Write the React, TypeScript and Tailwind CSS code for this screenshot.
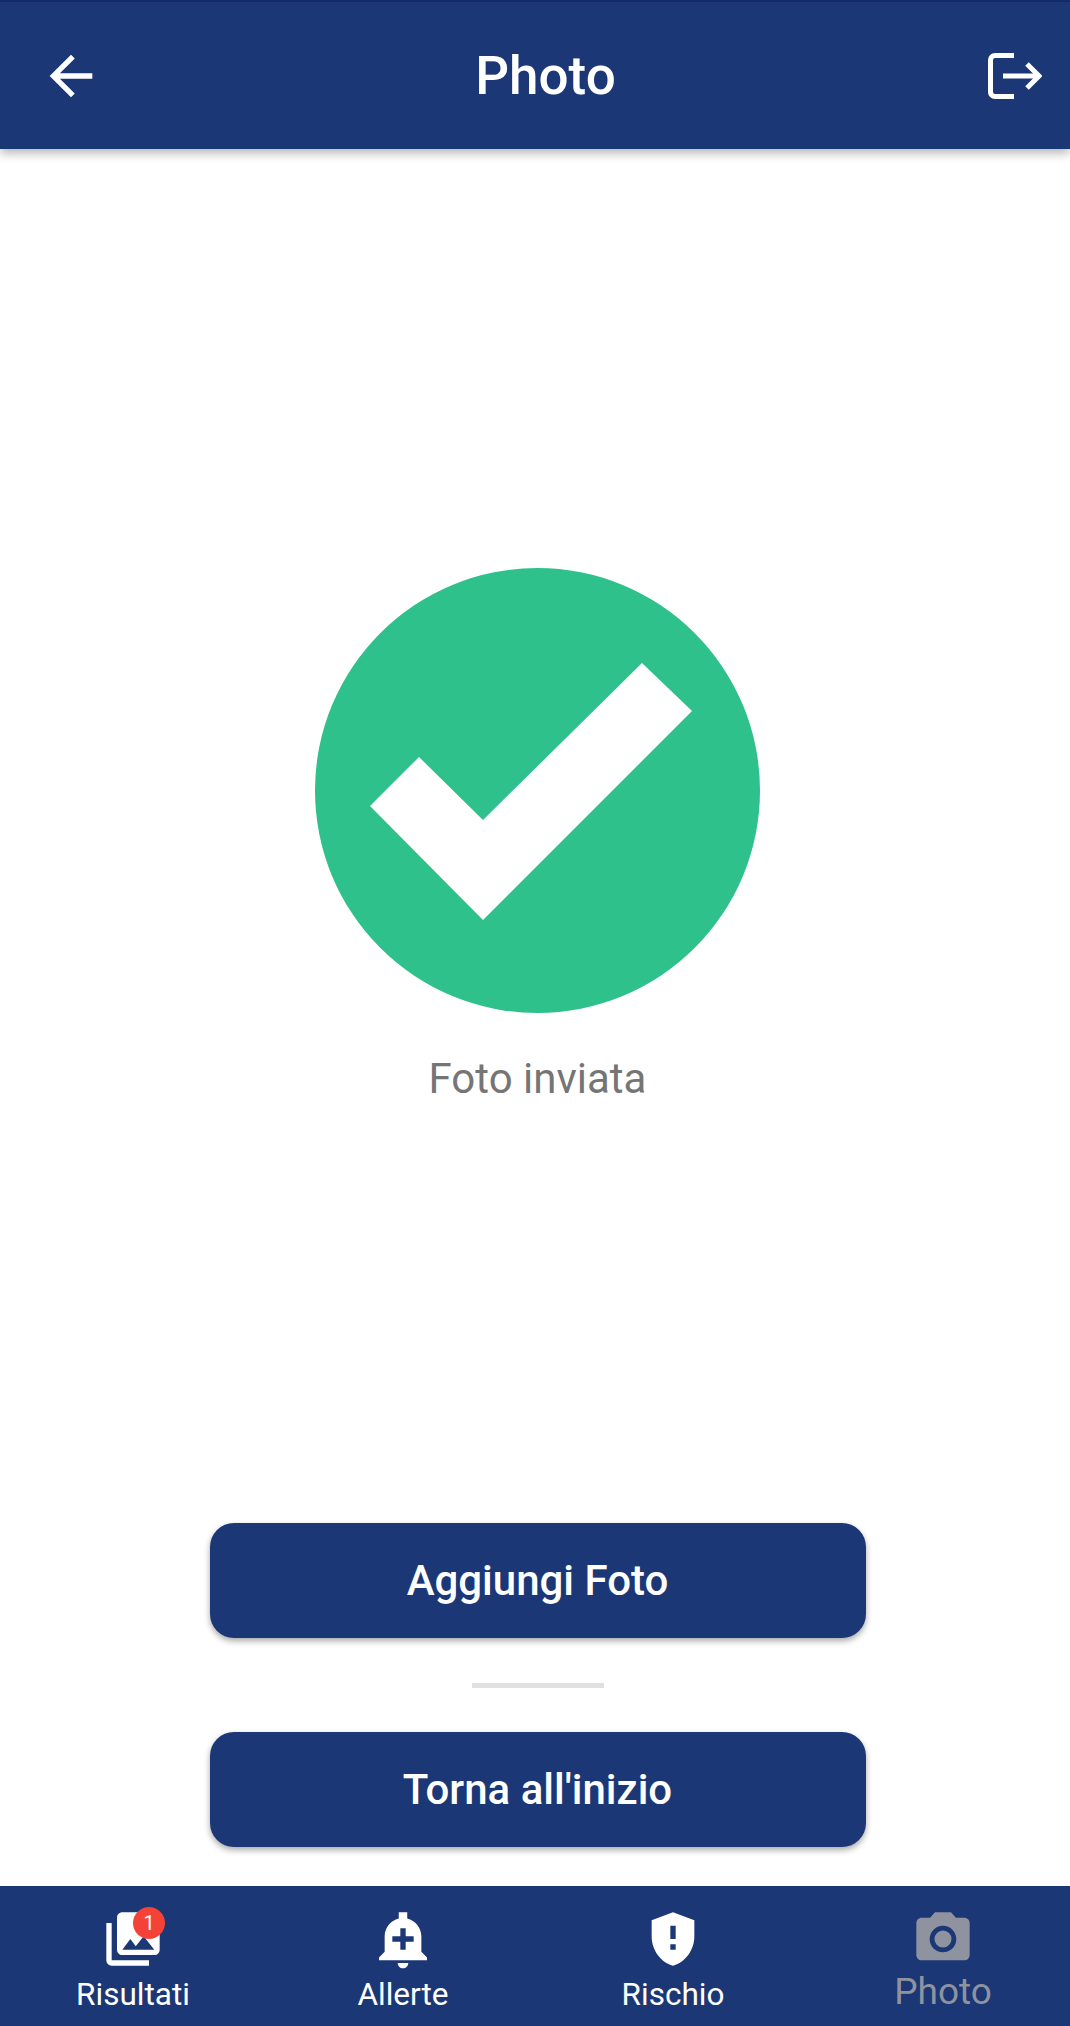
import React from "react";

function Btn({ label }: { label: string }) {
  return (
    <button className="flex h-[115px] w-[656px] items-center justify-center rounded-[24px] bg-[#1c3775] text-[42px] font-medium text-white shadow-[0_3px_6px_rgba(0,0,0,0.35)]">
      {label}
    </button>
  );
}

function NavItem({ label, children, dim }: { label: string; children: React.ReactNode; dim?: boolean }) {
  return (
    <div className="flex w-[270px] shrink-0 flex-col items-center">
      <div className="relative h-[64px] w-[64px]">{children}</div>
      <span className={dim ? "mt-[-1px] text-[37px] leading-[44px] text-[#8e939f]" : "mt-[4px] text-[31.5px] leading-[40px] text-white"}>
        {label}
      </span>
    </div>
  );
}

export default function App() {
  return (
    <div className="flex h-[2026px] w-[1070px] flex-col overflow-hidden bg-white font-['Roboto',sans-serif]">
      <header className="z-10 flex h-[149px] shrink-0 items-center justify-between border-t-2 border-[#14296a] bg-[#1c3775] pl-[39px] pr-[28px] shadow-[0_4px_10px_rgba(0,0,0,0.3)]">
        <svg width="64" height="64" viewBox="0 0 24 24" fill="#fff">
          <path d="M20 11H7.83l5.59-5.59L12 4l-8 8 8 8 1.41-1.41L7.83 13H20v-2z" />
        </svg>
        <h1 className="mt-[2px] text-[53px] font-medium leading-none text-white">Photo</h1>
        <svg width="54" height="46" viewBox="0 0 54 46" fill="none" stroke="#fff" strokeWidth="5">
          <path d="M26 2.5H7A4.5 4.5 0 0 0 2.5 7v32A4.5 4.5 0 0 0 7 43.5h19" />
          <path d="M15 23h34" />
          <path d="M39 11l12 12-12 12" />
        </svg>
      </header>

      <main className="flex flex-1 flex-col items-center pl-[5px]">
        <div className="mt-[419px] flex h-[445px] w-[445px] items-center justify-center rounded-full bg-[#2ec18c]">
          <svg width="445" height="445" viewBox="0 0 445 445">
            <polygon points="55,238 104,189 168,252 327,95 377,143 168,352" fill="#fff" />
          </svg>
        </div>
        <p className="mt-[40px] text-[42px] leading-[52px] text-[#757575]">Foto inviata</p>

        <div className="mt-[418px] flex flex-col items-center">
          <Btn label="Aggiungi Foto" />
          <div className="mb-[44px] mt-[45px] h-[5px] w-[132px] bg-[#e0e0e0]" />
          <Btn label="Torna all'inizio" />
        </div>
      </main>

      <nav className="flex h-[140px] shrink-0 bg-[#1c3775] pt-[21px]">
        <div className="-ml-[2px] flex">
          <NavItem label="Risultati">
            <svg width="64" height="64" viewBox="0 0 24 24" fill="#fff">
              <path d="M22 16V4c0-1.1-.9-2-2-2H8c-1.1 0-2 .9-2 2v12c0 1.1.9 2 2 2h12c1.1 0 2-.9 2-2zm-11-4l2.03 2.71L16 11l4 5H8l3-4zM2 6v14c0 1.1.9 2 2 2h14v-2H4V6H2z" />
            </svg>
            <span className="absolute left-[32px] top-[0px] flex h-[32px] w-[32px] items-center justify-center rounded-full bg-[#f44336] text-[20px] leading-none text-white">
              1
            </span>
          </NavItem>
          <NavItem label="Allerte">
            <svg width="64" height="64" viewBox="0 0 24 24" fill="#fff">
              <path d="M10.01 21.01c0 1.1.89 1.99 1.99 1.99s1.99-.89 1.99-1.99h-3.98zm8.87-4.19V11c0-3.25-2.25-5.97-5.29-6.69V2h-3.18v2.31C7.37 5.03 5.12 7.75 5.12 11v5.82L3 18.94V20h18v-1.06l-2.12-2.12zM16 13.01h-3v3h-2v-3H8V11h3V8h2v3h3v2.01z" />
            </svg>
          </NavItem>
          <NavItem label="Rischio">
            <svg width="64" height="64" viewBox="0 0 24 24" fill="#fff">
              <path d="M12 2L4 5v6.09c0 5.05 3.41 9.76 8 10.91 4.59-1.15 8-5.86 8-10.91V5l-8-3zm1 14h-2v-2h2v2zm0-4h-2V7h2v5z" />
            </svg>
          </NavItem>
          <NavItem label="Photo" dim>
            <svg width="64" height="64" viewBox="0 0 24 24" fill="#8e939f">
              <circle cx="12" cy="12" r="3.2" />
              <path d="M9 2L7.17 4H4c-1.1 0-2 .9-2 2v12c0 1.1.9 2 2 2h16c1.1 0 2-.9 2-2V6c0-1.1-.9-2-2-2h-3.17L15 2H9zm3 15c-2.76 0-5-2.24-5-5s2.24-5 5-5 5 2.24 5 5-2.24 5-5 5z" />
            </svg>
          </NavItem>
        </div>
      </nav>
    </div>
  );
}
